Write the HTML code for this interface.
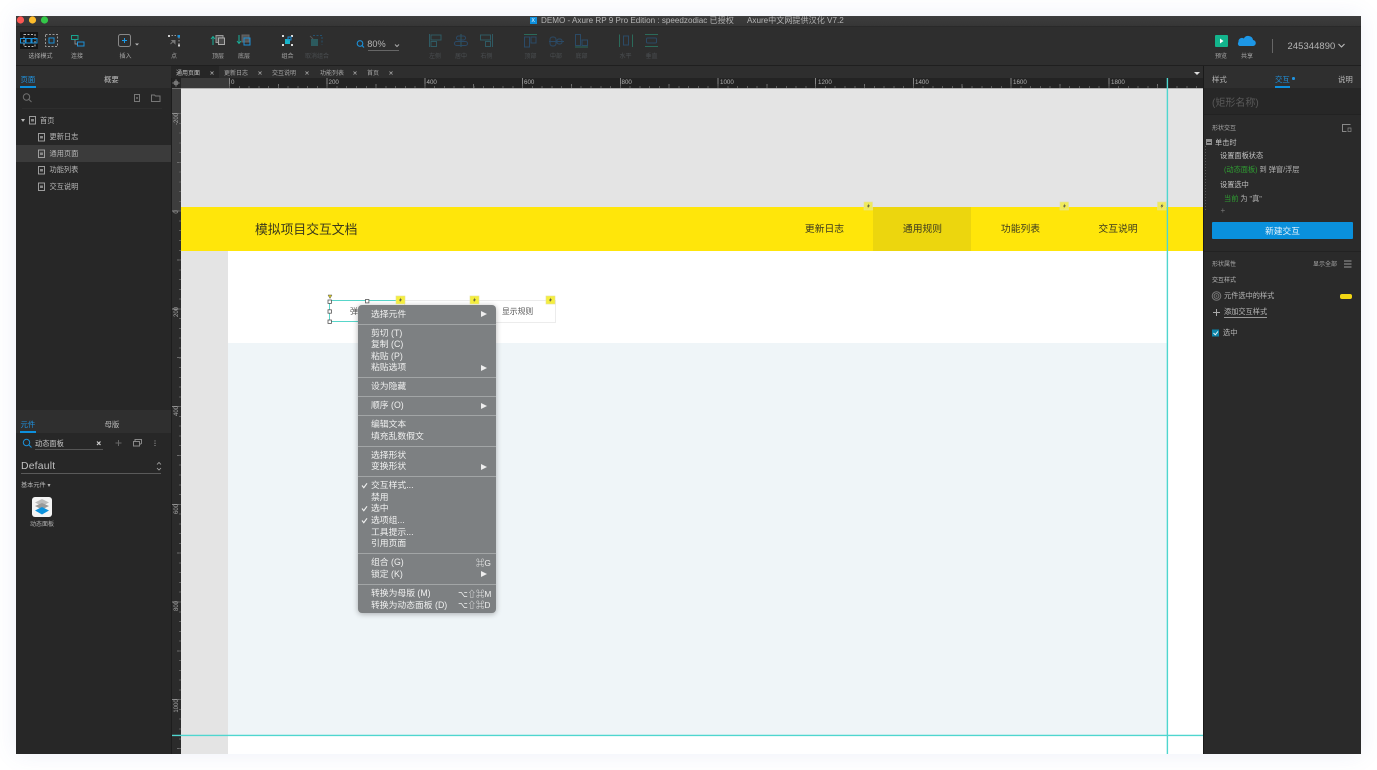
<!DOCTYPE html>
<html lang="zh">
<head>
<meta charset="utf-8">
<title>Axure RP 9</title>
<style>
html,body{margin:0;padding:0;background:#fff;}
body{width:1377px;height:770px;overflow:hidden;position:relative;font-family:"Liberation Sans","Noto Sans CJK SC",sans-serif;}
#shadow{position:absolute;left:16px;top:16px;width:1345px;height:738px;box-shadow:0 0 22px rgba(90,120,190,.11);}
#root{position:absolute;left:0;top:0;width:1377px;height:770px;overflow:hidden;filter:blur(.3px);}
.b{position:absolute;}
.t{position:absolute;white-space:nowrap;line-height:12px;height:12px;margin-top:-6px;color:#b9b9b9;font-size:7.2px;}
.c{transform:translateX(-50%);}
.s6{font-size:6px;color:#a8a8a8;margin-top:-5px;}
.d{color:#4b4f52;font-size:6px;margin-top:-5px;}
.v{transform:translate(-50%,0) rotate(-90deg);font-size:6px;color:#a5a5a5;}
.r{font-size:6.2px;color:#b0b0b0;}
.m{font-size:8.8px;color:#f0f0f0;margin-top:-6.5px;}
.sep{position:absolute;left:358px;width:138px;height:1.4px;background:#a2a5a6;}
.arr{position:absolute;left:481px;width:0;height:0;border-left:6px solid #eee;border-top:3.5px solid transparent;border-bottom:3.5px solid transparent;margin-top:-3.5px;}
.ms{font-size:8.4px;color:#eee;}
.nav{font-size:9.8px;color:#3b3a20;}
svg{position:absolute;left:0;top:0;}
</style>
</head>
<body>
<div id="shadow"></div>
<div id="root">
<!-- canvas -->
<div class="b" style="left:181px;top:88px;width:1022px;height:666px;background:#fff;"></div>
<div class="b" style="left:181px;top:88px;width:1022px;height:119px;background:#e4e4e4;"></div>
<div class="b" style="left:181px;top:251px;width:47px;height:503px;background:#e4e4e4;"></div>
<div class="b" style="left:228px;top:343px;width:939px;height:392px;background:#eff5f8;"></div>
<div class="b" style="left:181px;top:207px;width:1022px;height:44px;background:#ffe60a;"></div>
<div class="b" style="left:873px;top:207px;width:98px;height:44px;background:#ecd60e;"></div>
<div class="t" style="left:255px;top:230px;font-size:12.8px;color:#3a381c;">模拟项目交互文档</div>
<div class="t nav c" style="left:824.5px;top:230px;">更新日志</div>
<div class="t nav c" style="left:922.5px;top:230px;">通用规则</div>
<div class="t nav c" style="left:1020.5px;top:230px;">功能列表</div>
<div class="t nav c" style="left:1118px;top:230px;">交互说明</div>

<!-- widgets -->
<div class="b" style="left:404px;top:300px;width:150px;height:21px;border:1px solid #ececec;background:#fff;"></div>
<div class="t" style="left:350px;top:312px;font-size:8px;color:#555;">弹</div>
<div class="t" style="left:502px;top:312px;font-size:7.8px;color:#555;">显示规则</div>

<!-- panels -->
<div class="b" style="left:16px;top:16px;width:1345px;height:50px;background:#2e2e2e;"></div>
<div class="b" style="left:16px;top:16px;width:1345px;height:10px;background:linear-gradient(#3d3d3d,#363636);"></div>
<div class="b" style="left:16px;top:26px;width:1345px;height:1px;background:#292929;"></div>
<div class="b" style="left:16px;top:65px;width:1345px;height:1px;background:#1f1f1f;"></div>
<div class="b" style="left:16px;top:66px;width:156px;height:688px;background:#272727;"></div>
<div class="b" style="left:16px;top:66px;width:155px;height:22px;background:#2f2f2f;"></div>
<div class="b" style="left:171px;top:66px;width:1px;height:688px;background:#1d1d1d;"></div>
<div class="b" style="left:172px;top:66px;width:1031px;height:12px;background:#2e2e2e;"></div>
<div class="b" style="left:171px;top:66px;width:48px;height:12px;background:#262626;"></div>
<div class="b" style="left:1203px;top:66px;width:158px;height:688px;background:#2a2a2a;border-left:1px solid #1a1a1a;box-sizing:border-box;"></div>
<div class="b" style="left:1204px;top:66px;width:157px;height:22px;background:#2f2f2f;"></div>
<div class="b" style="left:1204px;top:88px;width:157px;height:26px;background:#272727;"></div>

<!-- rulers -->
<div class="b" style="left:172px;top:78px;width:1031px;height:10px;background:#232323;"></div>
<div class="b" style="left:181px;top:78px;width:48px;height:10px;background:#3a3a3a;"></div>
<div class="b" style="left:229px;top:78px;width:974px;height:10px;background:repeating-linear-gradient(90deg,#858585 0 1px,transparent 1px 97.7px);"></div>
<div class="b" style="left:229px;top:84px;width:974px;height:4px;background:repeating-linear-gradient(90deg,#6e6e6e 0 1px,transparent 1px 48.85px);"></div>
<div class="b" style="left:229px;top:86px;width:974px;height:2px;background:repeating-linear-gradient(90deg,#5c5c5c 0 1px,transparent 1px 9.77px);"></div>
<div class="b" style="left:172px;top:88px;width:9px;height:123px;background:#3d3d3d;"></div>
<div class="b" style="left:172px;top:211px;width:9px;height:543px;background:#2b2b2b;"></div>
<div class="b" style="left:172px;top:113px;width:9px;height:641px;background:repeating-linear-gradient(180deg,#858585 0 1px,transparent 1px 97.7px);"></div>
<div class="b" style="left:177px;top:113px;width:4px;height:641px;background:repeating-linear-gradient(180deg,#6e6e6e 0 1px,transparent 1px 48.85px);"></div>
<div class="b" style="left:179px;top:113px;width:2px;height:641px;background:repeating-linear-gradient(180deg,#5c5c5c 0 1px,transparent 1px 9.77px);"></div>
<div class="b" style="left:172px;top:88px;width:1031px;height:1px;background:#8d8d8d;opacity:.6;"></div>
<div class="t r" style="left:231px;top:83px;">0</div>
<div class="t r" style="left:328.5px;top:83px;">200</div>
<div class="t r" style="left:426.5px;top:83px;">400</div>
<div class="t r" style="left:524px;top:83px;">600</div>
<div class="t r" style="left:621.5px;top:83px;">800</div>
<div class="t r" style="left:720px;top:83px;">1000</div>
<div class="t r" style="left:818px;top:83px;">1200</div>
<div class="t r" style="left:915px;top:83px;">1400</div>
<div class="t r" style="left:1013px;top:83px;">1600</div>
<div class="t r" style="left:1111px;top:83px;">1800</div>
<div class="t v" style="left:176.5px;top:119px;">-200</div>
<div class="t v" style="left:176.5px;top:212px;">0</div>
<div class="t v" style="left:176.5px;top:312px;">200</div>
<div class="t v" style="left:176.5px;top:411px;">400</div>
<div class="t v" style="left:176.5px;top:509px;">600</div>
<div class="t v" style="left:176.5px;top:606px;">800</div>
<div class="t v" style="left:176.5px;top:706px;">1000</div>

<!-- title bar -->
<div class="b" style="left:530px;top:17px;width:7px;height:7px;background:#0d8fdc;"></div>
<div class="t" style="left:531.5px;top:20.5px;font-size:5px;color:#fff;">X</div>
<div class="t" style="left:541px;top:21px;font-size:8.1px;color:#b5b5b5;">DEMO - Axure RP 9 Pro Edition : speedzodiac 已授权</div>
<div class="t" style="left:747px;top:21px;font-size:8.1px;color:#b5b5b5;">Axure中文网提供汉化 V7.2</div>

<!-- toolbar labels -->
<div class="t s6 c" style="left:40.5px;top:55.5px;">选择模式</div>
<div class="t s6 c" style="left:77px;top:55.5px;">连接</div>
<div class="t s6 c" style="left:125.5px;top:55.5px;">插入</div>
<div class="t s6 c" style="left:174px;top:55.5px;">点</div>
<div class="t s6 c" style="left:218px;top:55.5px;">顶层</div>
<div class="t s6 c" style="left:244px;top:55.5px;">底层</div>
<div class="t s6 c" style="left:287.5px;top:55.5px;">组合</div>
<div class="t d c" style="left:317px;top:55.5px;">取消组合</div>
<div class="t c" style="left:376.5px;top:44px;font-size:9.2px;color:#b5b5b5;">80%</div>
<div class="b" style="left:368px;top:50px;width:31px;height:1px;background:#666;"></div>
<div class="t d c" style="left:435px;top:55.5px;">左侧</div>
<div class="t d c" style="left:461px;top:55.5px;">居中</div>
<div class="t d c" style="left:486.5px;top:55.5px;">右侧</div>
<div class="t d c" style="left:530.5px;top:55.5px;">顶部</div>
<div class="t d c" style="left:556px;top:55.5px;">中部</div>
<div class="t d c" style="left:581.5px;top:55.5px;">底部</div>
<div class="t d c" style="left:625.5px;top:55.5px;">水平</div>
<div class="t d c" style="left:651.5px;top:55.5px;">垂直</div>
<div class="t s6 c" style="left:1221px;top:55.5px;">预览</div>
<div class="t s6 c" style="left:1247px;top:55.5px;">共享</div>
<div class="b" style="left:1272px;top:39px;width:1px;height:14px;background:#666;"></div>
<div class="t" style="left:1287.5px;top:45.5px;font-size:9.4px;color:#b5b5b5;letter-spacing:.1px;">245344890</div>

<!-- tabs -->
<div class="t s6" style="left:176px;top:72.5px;color:#c8c8c8;">通用页面</div>
<div class="t s6" style="left:224px;top:72.5px;">更新日志</div>
<div class="t s6" style="left:272px;top:72.5px;">交互说明</div>
<div class="t s6" style="left:320px;top:72.5px;">功能列表</div>
<div class="t s6" style="left:367px;top:72.5px;">首页</div>

<!-- left pages panel -->
<div class="t" style="left:20.5px;top:80px;font-size:7.4px;color:#1f93e0;">页面</div>
<div class="b" style="left:20px;top:86px;width:16px;height:2px;background:#0d8fdc;"></div>
<div class="t" style="left:104px;top:80px;font-size:7.4px;">概要</div>
<div class="b" style="left:22px;top:108px;width:140px;height:1px;background:#2e2e2e;"></div>
<div class="b" style="left:16px;top:145px;width:155px;height:17px;background:#3b3b3b;"></div>
<div class="t" style="left:40px;top:120.5px;">首页</div>
<div class="t" style="left:49.5px;top:137px;">更新日志</div>
<div class="t" style="left:49.5px;top:153.5px;">通用页面</div>
<div class="t" style="left:49.5px;top:170px;">功能列表</div>
<div class="t" style="left:49.5px;top:186.5px;">交互说明</div>

<!-- left widgets panel -->
<div class="b" style="left:16px;top:410px;width:155px;height:23px;background:#2f2f2f;"></div>
<div class="t" style="left:20.5px;top:425px;font-size:7.4px;color:#1f93e0;">元件</div>
<div class="b" style="left:20px;top:431px;width:16px;height:2px;background:#0d8fdc;"></div>
<div class="t" style="left:104.5px;top:425px;font-size:7.4px;">母版</div>
<div class="t" style="left:35px;top:444px;font-size:7.2px;color:#c4c4c4;">动态面板</div>
<div class="b" style="left:35px;top:449px;width:68px;height:1px;background:#555;"></div>
<div class="t" style="left:21px;top:467px;font-size:10.4px;color:#c2c2c2;letter-spacing:.2px;">Default</div>
<div class="b" style="left:21px;top:473px;width:140px;height:1px;background:#5a5a5a;"></div>
<div class="t" style="left:21px;top:486px;font-size:6.2px;color:#b5b5b5;">基本元件 ▾</div>
<div class="t s6 c" style="left:42px;top:524px;color:#b5b5b5;">动态面板</div>

<!-- right panel -->
<div class="t" style="left:1212px;top:80px;font-size:7.4px;">样式</div>
<div class="t" style="left:1275px;top:80px;font-size:7.4px;color:#1f93e0;">交互</div>
<div class="b" style="left:1292px;top:77px;width:2.5px;height:2.5px;border-radius:50%;background:#1f93e0;"></div>
<div class="b" style="left:1275px;top:86px;width:15px;height:2px;background:#0d8fdc;"></div>
<div class="t" style="left:1338px;top:80px;font-size:7.4px;">说明</div>
<div class="t" style="left:1212px;top:104px;font-size:10px;color:#595959;">(矩形名称)</div>
<div class="b" style="left:1204px;top:114px;width:157px;height:1px;background:#222;"></div>
<div class="t s6" style="left:1212px;top:127.5px;">形状交互</div>
<div class="b" style="left:1206px;top:139px;width:6px;height:6px;background:#8e8e8e;"></div>
<div class="b" style="left:1207px;top:141.5px;width:4px;height:1px;background:#2a2a2a;"></div>
<div class="t" style="left:1215px;top:143px;color:#c4c4c4;">单击时</div>
<div class="t" style="left:1220px;top:156px;color:#c4c4c4;">设置面板状态</div>
<div class="t" style="left:1224px;top:170px;color:#2f9e32;">(动态面板) <span style="color:#b5b5b5">到 弹窗/浮层</span></div>
<div class="t" style="left:1220px;top:185px;color:#c4c4c4;">设置选中</div>
<div class="t" style="left:1224px;top:199px;color:#2f9e32;">当前 <span style="color:#b5b5b5">为 "真"</span></div>
<div class="t" style="left:1220.5px;top:211px;color:#777;font-size:8px;">+</div>
<div class="b" style="left:1212px;top:222px;width:141px;height:17px;background:#0a90dc;border-radius:1px;"></div>
<div class="t c" style="left:1282.5px;top:230.5px;font-size:8.7px;color:#e8f4fb;">新建交互</div>
<div class="b" style="left:1204px;top:251px;width:157px;height:1px;background:#222;"></div>
<div class="t s6" style="left:1212px;top:264px;">形状属性</div>
<div class="t s6" style="left:1313px;top:264px;">显示全部</div>
<div class="t s6" style="left:1212px;top:280px;color:#bdbdbd;">交互样式</div>
<div class="t" style="left:1224px;top:296px;">元件选中的样式</div>
<div class="b" style="left:1340px;top:293.5px;width:12px;height:5px;border-radius:2px;background:#f2d614;"></div>
<div class="t" style="left:1224px;top:312px;border-bottom:1px solid #999;height:11px;">添加交互样式</div>
<div class="t" style="left:1223px;top:333px;">选中</div>

<!-- vector icons under menu -->
<svg width="1377" height="770" viewBox="0 0 1377 770" fill="none">
<!-- guides -->
<path d="M1167.4 78V754M172 735.400H1203" stroke="#4fd6cf" stroke-width="1.400"/>
<!-- selection box -->
<path d="M330 300.500h74M330 321.500h28M329.500 300v22" stroke="#58d6ca" stroke-width="1"/>
</svg>

<!-- context menu -->
<div class="b" style="left:358px;top:305px;width:138px;height:308px;background:#7d8082;border-radius:4px;box-shadow:0 1px 6px rgba(0,0,0,.3);"></div>
<div class="t m" style="left:371px;top:314px;">选择元件</div><div class="arr" style="top:314.5px;"></div>
<div class="sep" style="top:323.5px;"></div>
<div class="t m" style="left:371px;top:333px;">剪切 (T)</div>
<div class="t m" style="left:371px;top:344.5px;">复制 (C)</div>
<div class="t m" style="left:371px;top:356px;">粘贴 (P)</div>
<div class="t m" style="left:371px;top:367.5px;">粘贴选项</div><div class="arr" style="top:368px;"></div>
<div class="sep" style="top:377px;"></div>
<div class="t m" style="left:371px;top:386.5px;">设为隐藏</div>
<div class="sep" style="top:396px;"></div>
<div class="t m" style="left:371px;top:405.5px;">顺序 (O)</div><div class="arr" style="top:406px;"></div>
<div class="sep" style="top:415px;"></div>
<div class="t m" style="left:371px;top:424.5px;">编辑文本</div>
<div class="t m" style="left:371px;top:436px;">填充乱数假文</div>
<div class="sep" style="top:445.5px;"></div>
<div class="t m" style="left:371px;top:455px;">选择形状</div>
<div class="t m" style="left:371px;top:466.5px;">变换形状</div><div class="arr" style="top:467px;"></div>
<div class="sep" style="top:476px;"></div>
<div class="t m" style="left:371px;top:485.5px;">交互样式...</div>
<div class="t m" style="left:371px;top:497px;">禁用</div>
<div class="t m" style="left:371px;top:508.5px;">选中</div>
<div class="t m" style="left:371px;top:520.5px;">选项组...</div>
<div class="t m" style="left:371px;top:532px;">工具提示...</div>
<div class="t m" style="left:371px;top:543.5px;">引用页面</div>
<div class="sep" style="top:553px;"></div>
<div class="t m" style="left:371px;top:562.5px;">组合 (G)</div>
<div class="t ms" style="left:476px;top:562.5px;">⌘G</div>
<div class="t m" style="left:371px;top:574px;">锁定 (K)</div><div class="arr" style="top:574.5px;"></div>
<div class="sep" style="top:584px;"></div>
<div class="t m" style="left:371px;top:593.5px;">转换为母版 (M)</div>
<div class="t ms" style="left:458px;top:593.5px;">⌥⇧⌘M</div>
<div class="t m" style="left:371px;top:605px;">转换为动态面板 (D)</div>
<div class="t ms" style="left:458px;top:605px;">⌥⇧⌘D</div>

<!-- vector icons -->
<svg width="1377" height="770" viewBox="0 0 1377 770" fill="none">
<!-- traffic lights -->
<circle cx="20.5" cy="20" r="3.6" fill="#fc5753"/><circle cx="32.5" cy="20" r="3.6" fill="#fdbc2c"/><circle cx="44.5" cy="20" r="3.6" fill="#33c748"/>
<!-- select mode -->
<rect x="20" y="32" width="18" height="17" fill="#161616"/>
<rect x="24" y="34.5" width="11" height="12" stroke="#bbb" stroke-dasharray="2 1.5"/>
<path d="M20.5 38.5h5v4.5h-5zM26 38.5h5v4.5h-5zM32 38.5h5v4.5h-5z" stroke="#1c90d8"/>
<rect x="45.5" y="34.5" width="12" height="12" stroke="#999" stroke-dasharray="2 1.5"/>
<rect x="49" y="38" width="5" height="5" stroke="#1c90d8"/>
<!-- connect -->
<rect x="71.5" y="35.5" width="6.5" height="4" stroke="#19a28e"/><rect x="77.5" y="42" width="6.5" height="4" stroke="#1c90d8"/>
<path d="M75 40v4h2.500" stroke="#aaa" stroke-width=".7"/>
<!-- insert -->
<rect x="118.500" y="34.500" width="12" height="12" rx="2" stroke="#888"/>
<path d="M124.500 38v5M122 40.500h5" stroke="#1c9be8"/>
<path d="M135 43.500h4l-2 2z" fill="#bbb"/>
<!-- point -->
<path d="M168.500 35.500h9M179 37v8" stroke="#999" stroke-dasharray="1.500 1.500"/>
<rect x="168" y="35" width="2" height="2" fill="#ccc"/><rect x="177.500" y="35" width="2.500" height="2.500" fill="#1c90d8"/><rect x="178" y="44.500" width="2" height="2" fill="#ccc"/>
<path d="M170.500 44l3.500-3.500M172 40.500h3v3z" stroke="#777" fill="#777"/>
<!-- top/bottom layer -->
<path d="M213 45v-8M211 39l2-2.500 2 2.500" stroke="#1ab09a"/><rect x="216" y="35.500" width="7" height="7" stroke="#999" fill="#555"/><rect x="218.500" y="38" width="6" height="6.500" stroke="#aaa" fill="#4a4a4a"/>
<path d="M239 35v8M237 41l2 2.500 2-2.500" stroke="#1ab09a"/><rect x="242" y="35" width="7" height="7" fill="#555" stroke="#666"/><rect x="244" y="38" width="6" height="7" stroke="#1c90d8"/>
<!-- group -->
<path d="M282 35h2v2h-2zM291 35h2v2h-2zM282 44h2v2h-2zM291 44h2v2h-2z" fill="#ddd"/>
<rect x="285" y="39" width="5" height="5" fill="#19b5c9"/><rect x="288" y="37" width="3" height="3" stroke="#1c90d8"/>
<!-- ungroup -->
<g opacity=".55"><rect x="311" y="39" width="7" height="7" fill="#2c7f86"/><path d="M313 35.500h9v9" stroke="#1c6ea5" stroke-dasharray="2 1.500"/><path d="M310 36l3 3" stroke="#777"/></g>
<!-- zoom -->
<circle cx="360" cy="43.500" r="2.800" stroke="#1c90d8" stroke-width="1.100"/><path d="M362 45.500l2 2" stroke="#1c90d8" stroke-width="1.200"/>
<path d="M395 44.500l2 2 2-2" stroke="#aaa"/>
<!-- align icons (disabled) -->
<g stroke="#2f5a63" stroke-width="1">
<path d="M429.500 34v13"/><rect x="431" y="35" width="10" height="5"/><rect x="431" y="41.500" width="5.500" height="5"/>
<path d="M461 34v13" /><rect x="456.500" y="36" width="9" height="4" rx="2" stroke="#2b4a66"/><rect x="454.500" y="41.500" width="13" height="4" rx="2" stroke="#2b4a66"/>
<path d="M492.500 34v13"/><rect x="480.500" y="35" width="10" height="5"/><rect x="485.500" y="41.500" width="5" height="5"/>
<path d="M524 34.500h13" stroke="#2b6a5a"/><rect x="524.500" y="37" width="5" height="10" stroke="#2b4a66"/><rect x="531" y="37" width="5" height="6" stroke="#2b4a66"/>
<rect x="550" y="37" width="6" height="9" rx="2.500" stroke="#2b4a66"/><rect x="557" y="39" width="5" height="5" rx="2" stroke="#2b4a66"/><path d="M549 41.500h15" stroke="#2b4a66"/>
<rect x="575.500" y="34.500" width="5" height="11" stroke="#2b4a66"/><rect x="582" y="40" width="5.500" height="5.500" stroke="#2b4a66"/><path d="M575 47h13" stroke="#2b6a5a"/>
<path d="M619.500 34.500v12.500M632.500 34.500v12.500" stroke="#2b6a5a"/><rect x="623.500" y="36" width="5" height="9" stroke="#2b4a66"/>
<path d="M645 34.500h13M645 46.500h13" stroke="#2b6a5a"/><rect x="646.500" y="38" width="10" height="5" rx="1" stroke="#2b4a66"/>
</g>
<!-- preview/share -->
<rect x="1215" y="35" width="13" height="12" rx="1" fill="#13b48c"/><path d="M1220 38.500l3.500 2.500-3.500 2.500z" fill="#fff"/>
<path d="M1243 46h9.500a3 3 0 0 0 .6-6 5 5 0 0 0-9.300-1.500 3.500 3.500 0 0 0-5.300 3.500 2.500 2.500 0 0 0 1 4z" fill="#1d97e6"/>
<path d="M1338.500 44l3 3 3-3" stroke="#bbb" stroke-width="1.100"/>
<!-- tab close x -->
<g stroke="#aaa" stroke-width=".8">
<path d="M210.500 71.500l3 3m0-3l-3 3M258.500 71.500l3 3m0-3l-3 3M305.500 71.500l3 3m0-3l-3 3M353.500 71.500l3 3m0-3l-3 3M389.500 71.500l3 3m0-3l-3 3"/>
</g>
<path d="M1194 72h6l-3 3z" fill="#ddd"/>
<!-- ruler corner -->
<circle cx="176" cy="83" r="2.500" fill="#777"/><path d="M176 79v8M172 83h8" stroke="#777" stroke-width=".7"/>
<!-- page panel icons -->
<circle cx="26.500" cy="97" r="3.200" stroke="#6f6f6f"/><path d="M29 99.500l2.500 2.500" stroke="#6f6f6f"/>
<rect x="134.500" y="94.500" width="5" height="7" stroke="#777"/><path d="M136 98h2" stroke="#999"/>
<path d="M151.500 95h3l1 1h4.500v5.500h-8.500z" stroke="#777"/>
<!-- tree -->
<path d="M21 119h4l-2 3z" fill="#bbb"/>
<g stroke="#aaa" stroke-width=".9">
<rect x="29.500" y="116.500" width="6" height="7.500"/><rect x="38.500" y="133.500" width="6" height="7.500"/><rect x="38.500" y="150" width="6" height="7.500"/><rect x="38.500" y="166.500" width="6" height="7.500"/><rect x="38.500" y="183" width="6" height="7.500"/>
</g>
<g fill="#888"><rect x="31" y="119" width="3" height="2.500"/><rect x="40" y="136" width="3" height="2.500"/><rect x="40" y="152.500" width="3" height="2.500"/><rect x="40" y="169" width="3" height="2.500"/><rect x="40" y="185.500" width="3" height="2.500"/></g>
<!-- widgets panel icons -->
<circle cx="26.500" cy="442.500" r="3.200" stroke="#1c90d8"/><path d="M29 445l2.500 2.500" stroke="#1c90d8"/>
<path d="M97 441.500l3.500 3.500m0-3.500l-3.500 3.500" stroke="#ccc" stroke-width="1.200"/>
<path d="M118.500 440v6M115.500 443h6" stroke="#666"/>
<rect x="133.500" y="441.500" width="6" height="4.500" stroke="#888"/><path d="M135 441v-1.500h6.500v4l-2 1" stroke="#888"/>
<path d="M155 440.500v.9M155 442.800v.9M155 445v.9" stroke="#aaa"/>
<path d="M157 464.500l2-2 2 2M157 468l2 2 2-2" stroke="#aaa" stroke-width=".8"/>
<rect x="32" y="497" width="20" height="20" rx="3" fill="#f4f4f4"/>
<path d="M42 499l7 3.500-7 3.500-7-3.500z" fill="#bcbcbc"/><path d="M35 506l7-3 7 3-7 3.500z" fill="#9a9a9a"/><path d="M35 510.500l7-3.500 7 3.500-7 4z" fill="#0d92dc"/>
<!-- right panel icons -->
<path d="M1350.500 124.500h-8v7h4" stroke="#888"/><path d="M1348 128h3v3.500h-3z" stroke="#888" stroke-width=".7"/>
<path d="M1205.500 146v64" stroke="#555" stroke-dasharray="1 2"/>
<path d="M1344 261h7.500M1344 264h7.500M1344 267h7.500" stroke="#999"/>
<circle cx="1216.500" cy="296" r="4.300" stroke="#777"/><circle cx="1216.500" cy="296" r="2.400" stroke="#777"/><circle cx="1216.500" cy="296" r=".8" fill="#777"/>
<path d="M1216.500 309v7M1213 312.500h7" stroke="#aaa"/>
<rect x="1212" y="329.500" width="7" height="7" fill="#0c84a8"/>
<path d="M1213.500 333l1.800 1.800 2.700-3.400" stroke="#e8f4f8" stroke-width="1"/>
<!-- context menu checkmarks -->
<path d="M362 485.500l1.800 2.200 3.200-4.400M362 508.500l1.800 2.200 3.200-4.400M362 520.500l1.800 2.200 3.200-4.400" stroke="#f2f2f2" stroke-width="1.100"/>
<!-- selection handles -->
<g fill="#fff" stroke="#555" stroke-width=".8">
<rect x="328" y="300" width="3.400" height="3.400"/><rect x="365.500" y="299.500" width="3.400" height="3.400"/><rect x="328" y="309.800" width="3.400" height="3.400"/><rect x="328" y="320" width="3.400" height="3.400"/>
</g>
<path d="M328 295h4l-2 3.500z" fill="#d6c820" stroke="#555" stroke-width=".5"/>
<!-- lightning badges -->
<g stroke="#e4e19a" stroke-width=".6">
<rect x="396" y="296" width="9" height="8" fill="#f5ee3d"/><rect x="470" y="296" width="9" height="8" fill="#f5ee3d"/><rect x="546" y="296" width="9" height="8" fill="#f5ee3d"/>
<rect x="864" y="202" width="8.500" height="8" fill="#f0ea5c"/><rect x="1060" y="202" width="8.500" height="8" fill="#f0ea5c"/><rect x="1157.500" y="202" width="8.500" height="8" fill="#f0ea5c"/>
</g>
<g fill="#444">
<path d="M401 297.500l-2 3h1.500l-1 2 2.500-3h-1.500z"/><path d="M475 297.500l-2 3h1.500l-1 2 2.500-3h-1.500z"/><path d="M551 297.500l-2 3h1.500l-1 2 2.500-3h-1.500z"/>
<path d="M869 203.500l-2 3h1.500l-1 2 2.500-3h-1.500z"/><path d="M1065 203.500l-2 3h1.500l-1 2 2.500-3h-1.500z"/><path d="M1162.500 203.500l-2 3h1.500l-1 2 2.500-3h-1.500z"/>
</g>
</svg>
</div>
</body>
</html>
